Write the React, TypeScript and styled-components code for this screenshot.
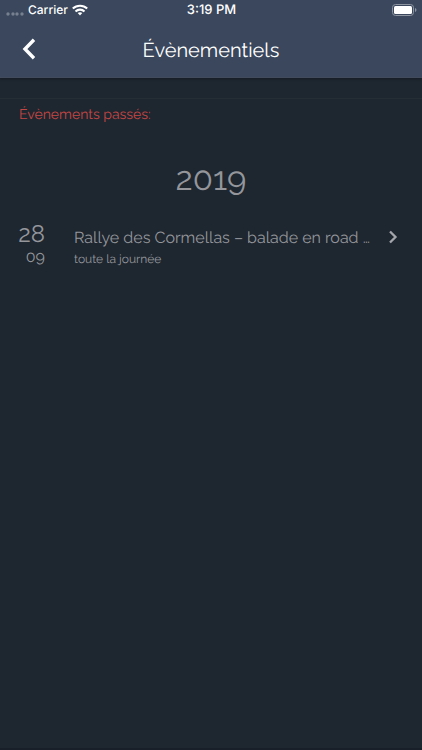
import React from "react";
import styled, { createGlobalStyle } from "styled-components";

const GlobalStyle = createGlobalStyle`
  *, *::before, *::after { box-sizing: border-box; }
  body {
    margin: 0;
    background: #1e262f;
    color: #94969c;
    font-family: Raleway, Lato, "Open Sans", sans-serif;
    text-rendering: geometricPrecision;
  }
`;

const Screen = styled.div`
  min-height: 100vh;
  display: flex;
  flex-direction: column;
  border-bottom: 2px solid #191f28;
`;

const Header = styled.header`
  background: #3a475c;
  color: #fff;
  border-bottom: 1px solid #414b5b;
  box-shadow: 0 1px 2px #171d25;
`;

const StatusBar = styled.div`
  display: grid;
  grid-template-columns: 1fr auto 1fr;
  align-items: center;
  height: 20px;
  padding: 0 5px 0 6px;
  font: 500 12px/20px Inter, sans-serif;
`;

const StatusGroup = styled.div<{ $end?: boolean }>`
  display: flex;
  align-items: center;
  justify-content: ${(p) => (p.$end ? "flex-end" : "flex-start")};
  gap: 4px;
`;

const Clock = styled.span`
  font-size: 13px;
`;

const NavBar = styled.div`
  display: grid;
  grid-template-columns: 58px 1fr 58px;
  align-items: center;
  height: 57px;
`;

const BackButton = styled.button`
  display: flex;
  align-items: center;
  justify-content: center;
  height: 44px;
  padding: 0;
  border: 0;
  background: none;
  color: inherit;
  cursor: pointer;
`;

const Title = styled.h1`
  margin: 0;
  padding-top: 2px;
  font-size: 20px;
  line-height: 28px;
  font-weight: 400;
  text-align: center;
`;

const Spacer = styled.div`
  height: 21px;
  border-bottom: 1px solid #252d35;
`;

const SectionTitle = styled.h2`
  margin: 0;
  padding: 6px 19px;
  color: #c64645;
  font-size: 14px;
  line-height: 20px;
  font-weight: 400;
`;

const Year = styled.h3`
  margin: 0;
  padding: 28px 0 22px;
  font-size: 33px;
  line-height: 40px;
  font-weight: 400;
  text-align: center;
`;

const EventList = styled.ul`
  margin: 0;
  padding: 0;
  list-style: none;
`;

const EventLink = styled.a`
  display: grid;
  grid-template-columns: 28px minmax(0, 1fr) 10px;
  column-gap: 14px;
  align-items: start;
  padding: 0 24px 0 17px;
  color: inherit;
  text-decoration: none;
`;

const EventDate = styled.time`
  display: flex;
  flex-direction: column;
  align-items: flex-end;
`;

const Day = styled.span`
  font-size: 24px;
  line-height: 26px;
`;

const Month = styled.span`
  font-size: 16px;
  line-height: 20px;
`;

const EventText = styled.div`
  padding: 5px 0 0 15px;
`;

const EventName = styled.div`
  font-size: 16px;
  line-height: 24px;
  white-space: nowrap;
`;

const EventTime = styled.div`
  font-size: 12px;
  line-height: 18px;
`;

const Chevron = styled.svg`
  margin-top: 9px;
`;

const Signal = () => (
  <svg width="18" height="12" viewBox="0 0 18 12" fill="#76808f" aria-hidden="true">
    {[2, 7, 11, 16].map((x) => (
      <circle key={x} cx={x} cy="10" r="1.7" />
    ))}
  </svg>
);

const Wifi = () => (
  <svg width="16" height="12" viewBox="0 0 16 12" fill="none" stroke="#fff" strokeWidth="2.1" aria-hidden="true">
    <path d="M.8 4.6C4.8.7 11.2.7 15.2 4.6" />
    <path d="M3.5 7.4c2.5-2.4 6.5-2.4 9 0" />
    <path d="M5.7 9.1c1.3-1.2 3.3-1.2 4.6 0L8 11.5z" fill="#fff" stroke="none" />
  </svg>
);

const Battery = () => (
  <svg width="25" height="12" viewBox="0 0 25 12" aria-hidden="true">
    <rect x=".5" y=".5" width="21" height="11" rx="3" fill="none" stroke="#8d95a1" />
    <rect x="2" y="2" width="18" height="8" rx="1.5" fill="#fff" />
    <path d="M23 4c2 .7 2 3.300 0 4z" fill="#8d95a1" />
  </svg>
);

const events = [
  { day: "28", month: "09", date: "2019-09-28", name: "Rallye des Cormellas – balade en road …", time: "toute la journée" },
];

export default function App() {
  return (
    <>
      <GlobalStyle />
      <Screen>
        <Header>
          <StatusBar>
            <StatusGroup>
              <Signal />
              <span>Carrier</span>
              <Wifi />
            </StatusGroup>
            <Clock>3:19 PM</Clock>
            <StatusGroup $end>
              <Battery />
            </StatusGroup>
          </StatusBar>
          <NavBar>
            <BackButton type="button" aria-label="Retour">
              <svg width="14" height="22" viewBox="0 0 14 22" fill="none" stroke="currentColor" strokeWidth="3.4" aria-hidden="true">
                <path d="M12 1.800 3 11l9 9.200" />
              </svg>
            </BackButton>
            <Title>Évènementiels</Title>
          </NavBar>
        </Header>
        <main>
          <Spacer />
          <SectionTitle>Évènements passés:</SectionTitle>
          <Year>2019</Year>
          <EventList>
            {events.map((event) => (
              <li key={event.date}>
                <EventLink href="#evenement">
                  <EventDate dateTime={event.date}>
                    <Day>{event.day}</Day>
                    <Month>{event.month}</Month>
                  </EventDate>
                  <EventText>
                    <EventName>{event.name}</EventName>
                    <EventTime>{event.time}</EventTime>
                  </EventText>
                  <Chevron width="10" height="14" viewBox="0 0 10 14" fill="none" stroke="#a4a6ab" strokeWidth="2.300" aria-hidden="true">
                    <path d="M2 1.500 7.500 7 2 12.500" />
                  </Chevron>
                </EventLink>
              </li>
            ))}
          </EventList>
        </main>
      </Screen>
    </>
  );
}
